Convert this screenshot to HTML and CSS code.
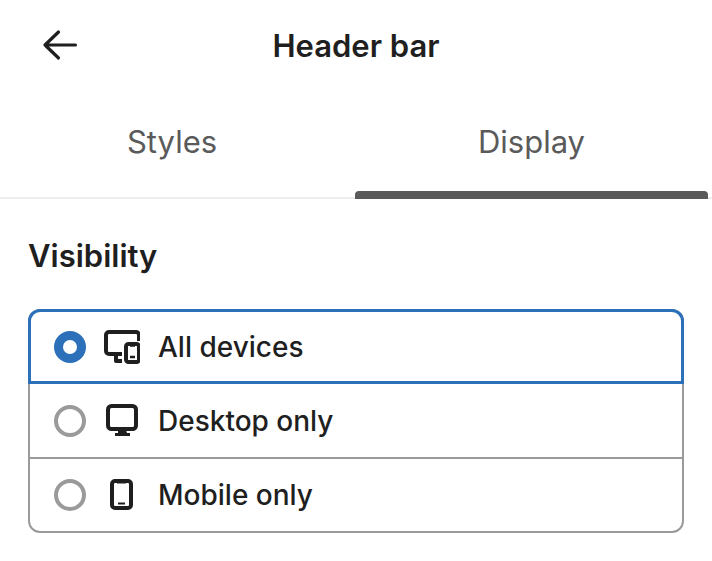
FILE: index.html
```html
<!DOCTYPE html>
<html>
  <head>
    <title>Header bar</title>
    <link rel="stylesheet" href="styles.css">
  </head>
  <body>
    <div class="header">
      <button class="back" aria-label="Back">
        <svg width="36" height="32" viewBox="0 0 36 32" fill="none" stroke="#1f1f1f" stroke-width="3.200" stroke-linecap="round" stroke-linejoin="round">
          <path d="M33.500 16H3M16.500 3L3 16l13.500 13"/>
        </svg>
      </button>
      <div class="title">Header bar</div>
    </div>

    <div class="tabs">
      <div class="tab">Styles</div>
      <div class="tab active">Display</div>
    </div>

    <div class="content">
      <h2>Visibility</h2>
      <div class="options">
        <label class="option selected">
          <span class="radio"></span>
          <svg class="icon" width="38" height="36" viewBox="0 0 38 36" fill="none" stroke="#1f1f1f" stroke-width="4" stroke-linejoin="round">
            <path d="M20 25H7a3 3 0 0 1-3-3V6a3 3 0 0 1 3-3h27a3 3 0 0 1 3 3v6"/>
            <path d="M14 25v7h6"/>
            <rect x="24" y="15" width="13" height="18" rx="2.500"/>
            <path d="M28 16h5" stroke-width="3.500"/>
            <path d="M28 28h5" stroke-width="2.500"/>
          </svg>
          <span class="name">All devices</span>
        </label>
        <label class="option">
          <span class="radio"></span>
          <svg class="icon" width="38" height="36" viewBox="0 0 38 36" fill="none" stroke="#1f1f1f" stroke-width="4" stroke-linejoin="round">
            <rect x="6" y="3" width="28" height="23" rx="3.500"/>
            <path d="M16 27h8l1 3h3v3H13v-3h3z" fill="#1f1f1f" stroke="none"/>
          </svg>
          <span class="name">Desktop only</span>
        </label>
        <label class="option">
          <span class="radio"></span>
          <svg class="icon" width="38" height="36" viewBox="0 0 38 36" fill="none" stroke="#1f1f1f" stroke-width="4" stroke-linejoin="round">
            <rect x="10" y="4" width="19" height="27" rx="3"/>
            <path d="M15 5h9" stroke-width="3"/>
            <path d="M16 26.500h7" stroke-width="2"/>
          </svg>
          <span class="name">Mobile only</span>
        </label>
      </div>
    </div>
  </body>
</html>
```

FILE: styles.css
```css
body {
  margin: 0;
  background-color: #ffffff;
  color: #1f1f1f;
  font-family: Inter, "Liberation Sans", sans-serif;
}

.header {
  display: flex;
  align-items: center;
  justify-content: center;
  position: relative;
  height: 92px;
}

.back {
  position: absolute;
  left: 42px;
  top: 29px;
  padding: 0;
  border: none;
  background: none;
  line-height: 0;
}

.title {
  margin-top: -2px;
  font-size: 31px;
  font-weight: 600;
}

.tabs {
  display: flex;
  height: 107px;
  border-bottom: 2px solid #eeeeee;
  box-sizing: border-box;
}

.tab {
  width: 344px;
  padding-top: 31px;
  font-size: 31px;
  text-align: center;
  color: #5a5a5a;
}

.tab.active {
  display: flex;
  flex-direction: column;
  justify-content: space-between;
  box-sizing: border-box;
  width: 353px;
  height: 107px;
  margin-left: 11px;
}

.tab.active::after {
  content: "";
  height: 8px;
  border-radius: 4px 4px 0 0;
  background-color: #5a5a5a;
}

.content {
  padding: 39px 28px 0;
}

h2 {
  margin: 0 0 35px;
  font-size: 31px;
  font-weight: 600;
  line-height: 36px;
}

.options {
  display: flex;
  flex-direction: column;
  border: 2px solid #9a9a9a;
  border-radius: 12px;
}

.option {
  display: flex;
  align-items: center;
  box-sizing: border-box;
  height: 73px;
  padding: 0 24px;
}

.option + .option + .option {
  height: 74px;
  border-top: 2px solid #9a9a9a;
}

.option.selected {
  height: 75px;
  margin: -2px -2px 0;
  padding: 0 23px;
  border: 3px solid #2b70b8;
  border-radius: 12px 12px 0 0;
}

.radio {
  width: 32px;
  height: 32px;
  box-sizing: border-box;
  border: 4px solid #9a9a9a;
  border-radius: 50%;
}

.selected .radio {
  border: 9px solid #2b70b8;
}

.icon {
  margin-left: 16px;
}

.name {
  margin-left: 18px;
  font-size: 28px;
  font-weight: 550;
}
```
